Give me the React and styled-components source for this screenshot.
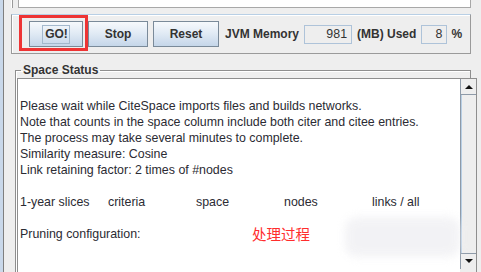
import React from 'react';
import styled, { createGlobalStyle } from 'styled-components';

const Global = createGlobalStyle`
  html, body {
    margin: 0;
    padding: 0;
    height: 100%;
    overflow: hidden;
    background: #eeeeee;
  }
  #root { height: 100%; }
`;

const Window = styled.div`
  display: flex;
  width: 481px;
  height: 272px;
  overflow: hidden;
  font-family: "Liberation Sans", Arial, sans-serif;
  color: #333333;
`;

const EdgeStrip = styled.div`
  flex: none;
  width: 3px;
  background: #c9d8ea;
  border-right: 1px solid #7f7f7f;
`;

const Content = styled.div`
  flex: 1;
  min-width: 0;
  display: flex;
  flex-direction: column;
  padding-right: 10px;
`;

const TopPanel = styled.div`
  flex: none;
  height: 8px;
  margin-left: 7px;
  padding-left: 6px;
  border-left: 1px solid #ffffff;
  box-shadow: inset 1px 0 0 #9a9a9a;
`;

const TopField = styled.div`
  height: 7px;
  background: #ffffff;
  border: 1px solid #a8a8a8;
  border-top: none;
`;

const ButtonPanel = styled.div`
  flex: none;
  position: relative;
  margin: 6px 0 0 7px;
  height: 38px;
  display: flex;
  align-items: center;
  gap: 5px;
  padding-left: 17px;
  border: 1px solid #9a9a9a;
  border-top-color: #b8cfe5;
  box-shadow: inset 1px 1px 0 #ffffff;
`;

const ButtonWrap = styled.div`
  position: relative;
  display: flex;
`;

const Button = styled.button`
  width: ${p => p.w}px;
  height: 26px;
  padding: 0;
  margin: 0;
  border: 1px solid #7a8a99;
  border-radius: 0;
  background: linear-gradient(#f6f9fc, #e2ebf5 45%, #c5d6e9);
  font: bold 12px "Liberation Sans", Arial, sans-serif;
  color: #333333;
  display: flex;
  align-items: center;
  justify-content: center;
`;

const FocusText = styled.span`
  padding: 1px 1px 2px 2px;
  border: 1px solid #a3b8cc;
`;

const Highlight = styled.div`
  position: absolute;
  left: -10px;
  top: -6px;
  width: 63px;
  height: 30px;
  border: 3px solid #ee3434;
  pointer-events: none;
`;

const Label = styled.span`
  font: bold 12px "Liberation Sans", Arial, sans-serif;
  color: #333333;
  margin-left: ${p => p.ml || 0}px;
`;

const NumField = styled.div`
  width: ${p => p.w}px;
  height: 19px;
  box-sizing: border-box;
  border: 1px solid #aec3d9;
  background: #eeeeee;
  text-align: right;
  padding-right: 4px;
  font: 12.4px/17px "Liberation Sans", Arial, sans-serif;
  color: #333333;
`;

const StatusBox = styled.fieldset`
  flex: none;
  margin: 9px 0 0 11px;
  padding: 1px 0 0 1px;
  border: 1px solid #8e8e8e;
  border-bottom: none;
  box-shadow: inset 1px 1px 0 #ffffff;
  min-width: 0;
  display: flex;
`;

const Legend = styled.legend`
  padding: 0 2px;
  margin-left: 4px;
  font: bold 12px/14px "Liberation Sans", Arial, sans-serif;
  color: #333333;
`;

const TextArea = styled.div`
  position: relative;
  flex: 1;
  height: 200px;
  display: flex;
  background: #ffffff;
  border: 1px solid #8e8e8e;
  border-bottom: none;
`;

const Lines = styled.div`
  flex: 1;
  padding: 3px 0 0 2px;
  font: 12.4px/16px "Liberation Sans", Arial, sans-serif;
  color: #2b2b33;
`;

const Line = styled.div`
  height: 16px;
  white-space: nowrap;
`;

const Columns = styled.div`
  height: 16px;
  display: grid;
  grid-template-columns: repeat(5, 88px);
  white-space: nowrap;
`;

const PruneRow = styled.div`
  height: 16px;
  display: grid;
  grid-template-columns: 232px auto;
  white-space: nowrap;
`;

const Note = styled.span`
  font: 14.5px/16px "Noto Sans CJK SC", sans-serif;
  color: #ff2d2d;
`;

const Smudge = styled.div`
  position: absolute;
  left: 327px;
  top: 138px;
  width: 115px;
  height: 40px;
  border-radius: 12px;
  background: #f0f0f3;
  filter: blur(4px);
  opacity: 0.8;
`;

const Scrollbar = styled.div`
  flex: none;
  width: 16px;
  display: flex;
  flex-direction: column;
  background: #eeeeee;
`;

const ArrowButton = styled.div`
  height: 15px;
  flex: none;
  border: 1px solid #8e9aa8;
  border-width: ${p => (p.down ? '1px 0 0 1px' : '0 0 1px 1px')};
  background: #eeeeee;
  display: flex;
  align-items: center;
  justify-content: center;
`;

const Thumb = styled.div`
  height: 158px;
  flex: none;
  border-left: 1px solid #8e9aa8;
  box-shadow: inset 1px 0 0 #b8cfe5;
  background: #eeeeee;
`;

const Arrow = ({ down }) => (
  <svg width="8" height="5" viewBox="0 0 8 5">
    <path d={down ? 'M0 0H8L4 4Z' : 'M0 5H8L4 1Z'} fill="#111" />
  </svg>
);

export default function App() {
  return (
    <>
      <Global />
      <Window>
        <EdgeStrip />
        <Content>
          <TopPanel>
            <TopField />
          </TopPanel>
          <ButtonPanel>
            <ButtonWrap>
              <Button w={54}><FocusText>GO!</FocusText></Button>
              <Highlight />
            </ButtonWrap>
            <Button w={60}>Stop</Button>
            <Button w={66}>Reset</Button>
            <Label ml={1}>JVM Memory</Label>
            <NumField w={48}>981</NumField>
            <Label>(MB) Used</Label>
            <NumField w={26}>8</NumField>
            <Label ml={-1}>%</Label>
          </ButtonPanel>
          <StatusBox>
            <Legend>Space Status</Legend>
            <TextArea>
              <Lines>
                <Line />
                <Line>Please wait while CiteSpace imports files and builds networks.</Line>
                <Line>Note that counts in the space column include both citer and citee entries.</Line>
                <Line>The process may take several minutes to complete.</Line>
                <Line>Similarity measure: Cosine</Line>
                <Line>Link retaining factor: 2 times of #nodes</Line>
                <Line />
                <Columns>
                  <span>1-year slices</span>
                  <span>criteria</span>
                  <span>space</span>
                  <span>nodes</span>
                  <span>links / all</span>
                </Columns>
                <Line />
                <PruneRow>
                  <span>Pruning configuration:</span>
                  <Note>处理过程</Note>
                </PruneRow>
              </Lines>
              <Smudge />
              <Scrollbar>
                <ArrowButton><Arrow /></ArrowButton>
                <Thumb />
                <ArrowButton down><Arrow down /></ArrowButton>
              </Scrollbar>
            </TextArea>
          </StatusBox>
        </Content>
      </Window>
    </>
  );
}
